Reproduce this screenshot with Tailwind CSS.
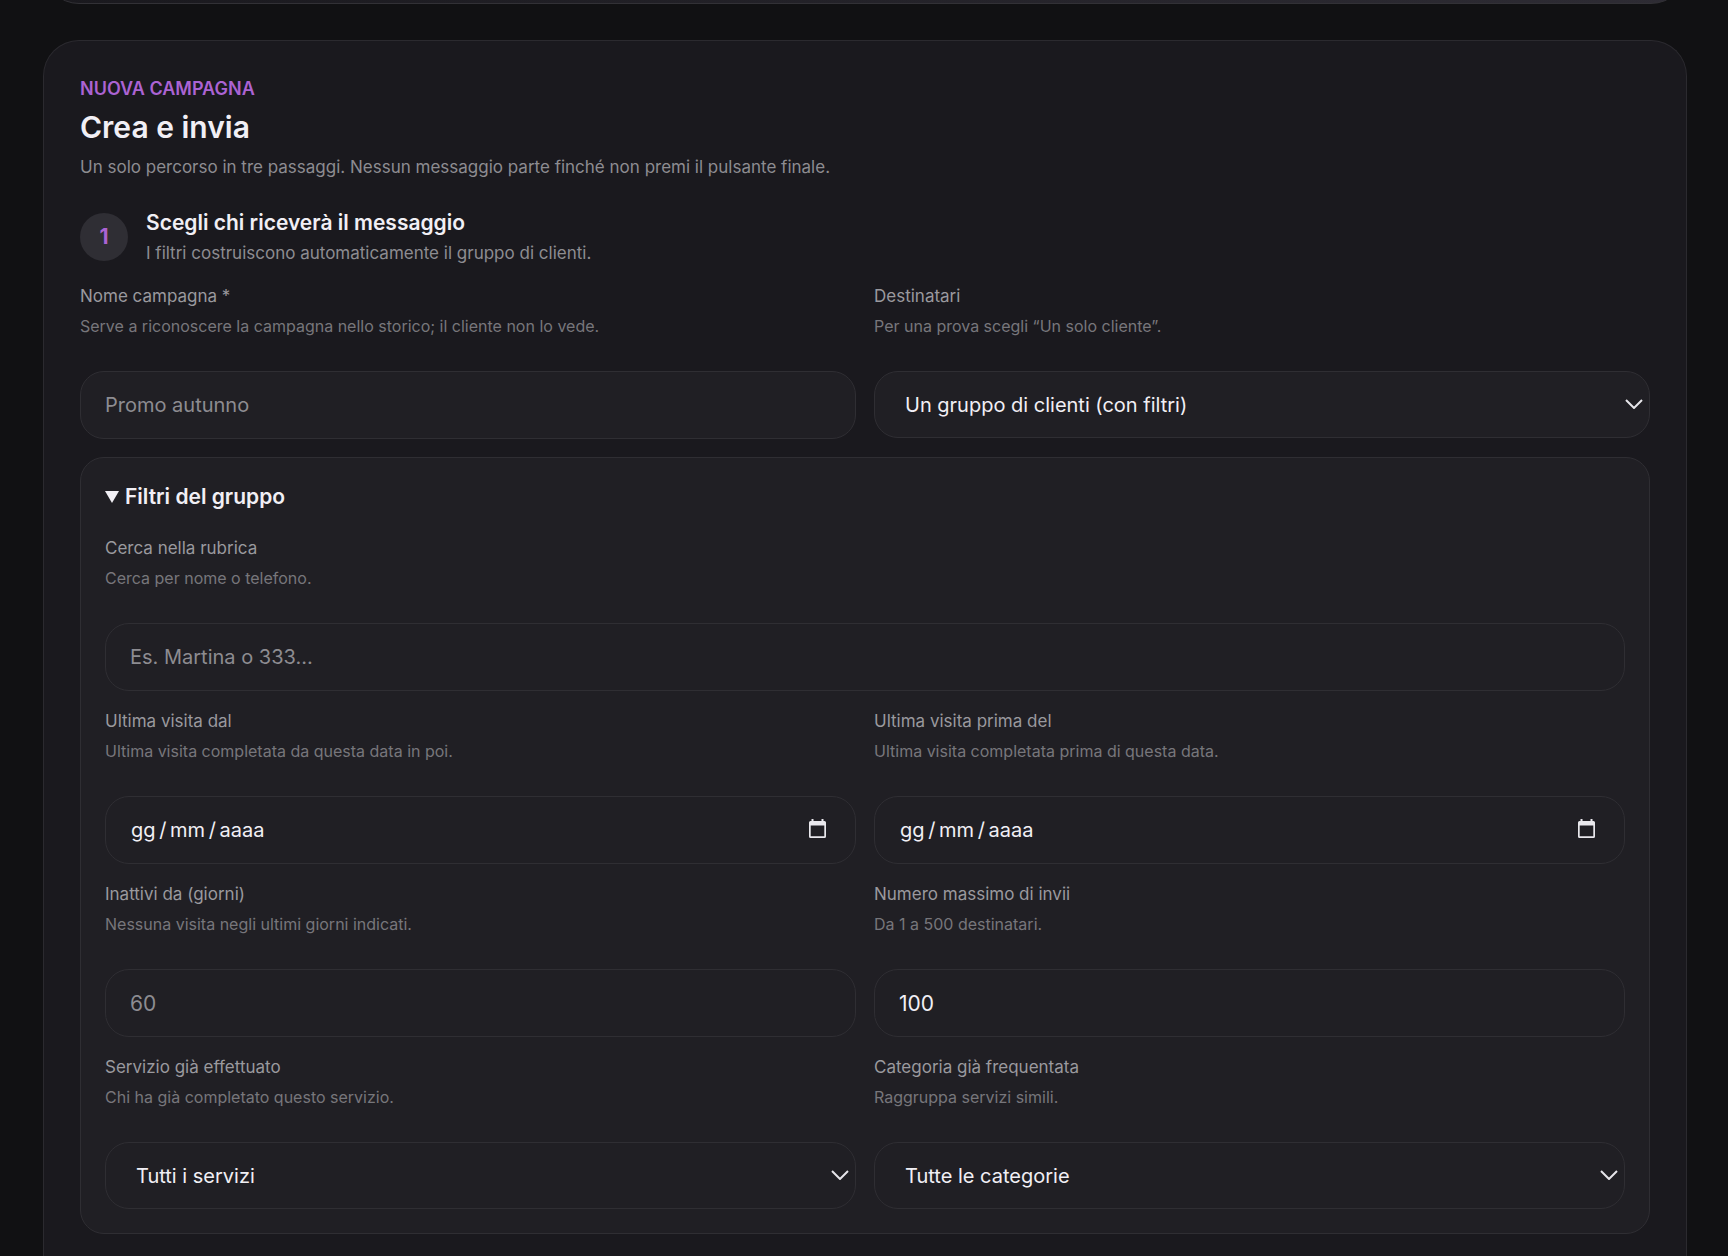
<!DOCTYPE html>
<html lang="it">
<head>
    <meta charset="UTF-8">
    <meta name="viewport" content="width=device-width, initial-scale=1.0">
    <title>Nuova campagna</title>
    <script src="https://cdn.jsdelivr.net/npm/@tailwindcss/browser@4"></script>
    <style>
        body {
            font-family: 'Inter', sans-serif;
        }
    </style>
</head>
<body class="bg-[#111113] text-[#f1eff5] min-h-screen overflow-x-hidden">
    <main class="pl-[43px] pr-[41px]">
        <!-- Bottom edge of the previous card -->
        <section class="-mt-20 h-[84px] rounded-[36px] border border-[#323136] bg-linear-to-r from-[#1a191e] to-[#2e2c34]"></section>

        <section class="mt-9 rounded-t-[36px] border border-b-0 border-[#2b2a2f] bg-[#1a191e] p-9">
            <header>
                <p class="text-[18px] leading-6 font-semibold text-[#ab63d3]">NUOVA CAMPAGNA</p>
                <h2 class="mt-2 text-[30px] leading-9 font-semibold">Crea e invia</h2>
                <p class="mt-2 text-[17px] leading-7 text-[#8d8c91]">Un solo percorso in tre passaggi. Nessun messaggio parte finché non premi il pulsante finale.</p>
            </header>

            <form onsubmit="return false">
                <div class="mt-[26px] flex items-center gap-[18px]">
                    <span class="flex size-12 items-center justify-center rounded-full bg-[#2f2e34] text-[21px] font-bold text-[#ab63d3]">1</span>
                    <div>
                        <h3 class="text-[21px] leading-8 font-semibold">Scegli chi riceverà il messaggio</h3>
                        <p class="text-[17px] leading-7 text-[#8d8c91]">I filtri costruiscono automaticamente il gruppo di clienti.</p>
                    </div>
                </div>

                <div class="mt-[17px] grid grid-cols-2 items-start gap-[18px]">
                    <div>
                        <label for="nome" class="block text-[17px] leading-6 text-[#9a999e]">Nome campagna *</label>
                        <p class="mt-[7px] mb-[34px] text-base leading-[22px] text-[#77767b]">Serve a riconoscere la campagna nello storico; il cliente non lo vede.</p>
                        <input id="nome" type="text" placeholder="Promo autunno" class="block h-17 w-full rounded-3xl border border-[#2f2e33] bg-[#201f24] px-6 text-[20px] placeholder:text-[#8d8c91]">
                    </div>
                    <div>
                        <label for="destinatari" class="block text-[17px] leading-6 text-[#9a999e]">Destinatari</label>
                        <p class="mt-[7px] mb-[34px] text-base leading-[22px] text-[#77767b]">Per una prova scegli “Un solo cliente”.</p>
                        <div class="relative">
                            <select id="destinatari" class="block h-[67px] w-full appearance-none rounded-3xl border border-[#2f2e33] bg-[#201f24] px-[30px] text-[20px]">
                                <option>Un gruppo di clienti (con filtri)</option>
                                <option>Un solo cliente</option>
                            </select>
                            <svg class="pointer-events-none absolute top-7 right-[7px] h-2.5 w-[18px]" viewBox="0 0 18 10" fill="none" stroke="#e6e5ea" stroke-width="2"><path d="M1 1l8 8 8-8"/></svg>
                        </div>
                    </div>
                </div>

                <details open class="mt-[18px] rounded-3xl border border-[#2f2e33] bg-[#201f24] p-6">
                    <summary class="flex list-none items-center gap-1.5 text-[21px] leading-[30px] font-semibold">
                        <svg class="h-3 w-3.5" viewBox="0 0 14 12" fill="#f1eff5"><path d="M0 0h14L7 12z"/></svg>
                        Filtri del gruppo
                    </summary>

                    <div class="mt-6 grid grid-cols-2 items-start gap-[18px]">
                        <div class="col-span-2">
                            <label for="cerca" class="block text-[17px] leading-6 text-[#9a999e]">Cerca nella rubrica</label>
                            <p class="mt-[7px] mb-[34px] text-base leading-[22px] text-[#77767b]">Cerca per nome o telefono.</p>
                            <input id="cerca" type="text" placeholder="Es. Martina o 333…" class="block h-17 w-full rounded-3xl border border-[#2f2e33] bg-[#201f24] px-6 text-[20px] placeholder:text-[#8d8c91]">
                        </div>

                        <div>
                            <label for="dal" class="block text-[17px] leading-6 text-[#9a999e]">Ultima visita dal</label>
                            <p class="mt-[7px] mb-[34px] text-base leading-[22px] text-[#77767b]">Ultima visita completata da questa data in poi.</p>
                            <div class="relative">
                                <input id="dal" type="text" placeholder="gg&#8201;/&#8201;mm&#8201;/&#8201;aaaa" class="block h-17 w-full rounded-3xl border border-[#2f2e33] bg-[#201f24] px-[25px] text-[20px] placeholder:text-[#f1eff5]">
                                <button type="button" aria-label="Apri calendario" class="absolute top-[23px] right-[29px]">
                                    <svg class="h-5 w-[18px]" viewBox="0 0 18 20" fill="#e9e8ed"><path fill-rule="evenodd" d="M2.500 0h2v2h8V0h2v2h1A1.500 1.500 0 0 1 17 3.500v14A1.500 1.500 0 0 1 15.500 19h-14A1.500 1.500 0 0 1 0 17.500v-14A1.500 1.500 0 0 1 1.500 2h1zM1.700 6.500v10.800h13.600V6.500z"/></svg>
                                </button>
                            </div>
                        </div>
                        <div>
                            <label for="prima" class="block text-[17px] leading-6 text-[#9a999e]">Ultima visita prima del</label>
                            <p class="mt-[7px] mb-[34px] text-base leading-[22px] text-[#77767b]">Ultima visita completata prima di questa data.</p>
                            <div class="relative">
                                <input id="prima" type="text" placeholder="gg&#8201;/&#8201;mm&#8201;/&#8201;aaaa" class="block h-17 w-full rounded-3xl border border-[#2f2e33] bg-[#201f24] px-[25px] text-[20px] placeholder:text-[#f1eff5]">
                                <button type="button" aria-label="Apri calendario" class="absolute top-[23px] right-[29px]">
                                    <svg class="h-5 w-[18px]" viewBox="0 0 18 20" fill="#e9e8ed"><path fill-rule="evenodd" d="M2.500 0h2v2h8V0h2v2h1A1.500 1.500 0 0 1 17 3.500v14A1.500 1.500 0 0 1 15.500 19h-14A1.500 1.500 0 0 1 0 17.500v-14A1.500 1.500 0 0 1 1.500 2h1zM1.700 6.500v10.800h13.600V6.500z"/></svg>
                                </button>
                            </div>
                        </div>

                        <div>
                            <label for="inattivi" class="block text-[17px] leading-6 text-[#9a999e]">Inattivi da (giorni)</label>
                            <p class="mt-[7px] mb-[34px] text-base leading-[22px] text-[#77767b]">Nessuna visita negli ultimi giorni indicati.</p>
                            <input id="inattivi" type="number" placeholder="60" class="block h-17 w-full rounded-3xl border border-[#2f2e33] bg-[#201f24] px-6 text-[21px] placeholder:text-[#8d8c91]">
                        </div>
                        <div>
                            <label for="massimo" class="block text-[17px] leading-6 text-[#9a999e]">Numero massimo di invii</label>
                            <p class="mt-[7px] mb-[34px] text-base leading-[22px] text-[#77767b]">Da 1 a 500 destinatari.</p>
                            <input id="massimo" type="number" min="1" max="500" value="100" class="block h-17 w-full rounded-3xl border border-[#2f2e33] bg-[#201f24] px-6 text-[21px]">
                        </div>

                        <div>
                            <label for="servizio" class="block text-[17px] leading-6 text-[#9a999e]">Servizio già effettuato</label>
                            <p class="mt-[7px] mb-[34px] text-base leading-[22px] text-[#77767b]">Chi ha già completato questo servizio.</p>
                            <div class="relative">
                                <select id="servizio" class="block h-[67px] w-full appearance-none rounded-3xl border border-[#2f2e33] bg-[#201f24] px-[30px] text-[20px]">
                                    <option>Tutti i servizi</option>
                                </select>
                                <svg class="pointer-events-none absolute top-7 right-[7px] h-2.5 w-[18px]" viewBox="0 0 18 10" fill="none" stroke="#e6e5ea" stroke-width="2"><path d="M1 1l8 8 8-8"/></svg>
                            </div>
                        </div>
                        <div>
                            <label for="categoria" class="block text-[17px] leading-6 text-[#9a999e]">Categoria già frequentata</label>
                            <p class="mt-[7px] mb-[34px] text-base leading-[22px] text-[#77767b]">Raggruppa servizi simili.</p>
                            <div class="relative">
                                <select id="categoria" class="block h-[67px] w-full appearance-none rounded-3xl border border-[#2f2e33] bg-[#201f24] px-[30px] text-[20px]">
                                    <option>Tutte le categorie</option>
                                </select>
                                <svg class="pointer-events-none absolute top-7 right-[7px] h-2.5 w-[18px]" viewBox="0 0 18 10" fill="none" stroke="#e6e5ea" stroke-width="2"><path d="M1 1l8 8 8-8"/></svg>
                            </div>
                        </div>
                    </div>
                </details>
            </form>
        </section>
    </main>
</body>
</html>
